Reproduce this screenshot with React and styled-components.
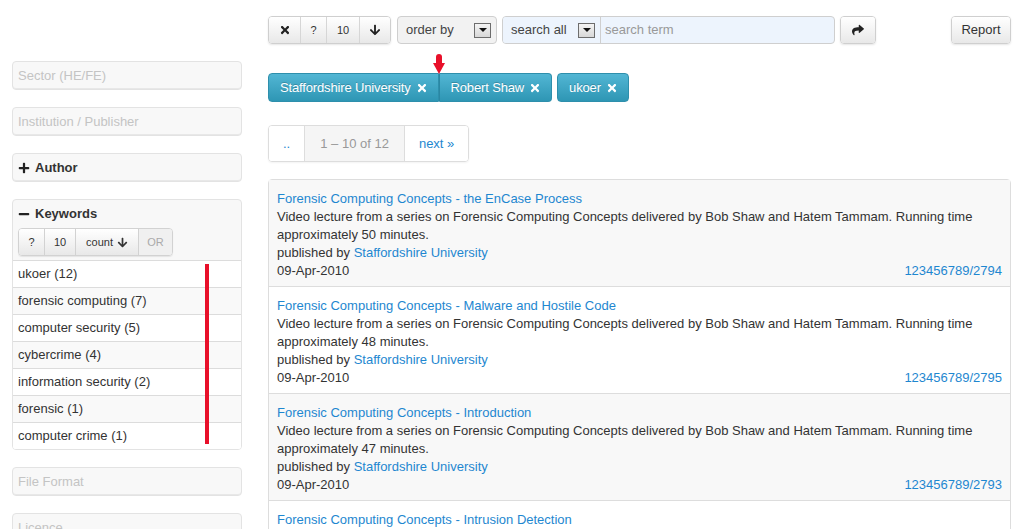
import React from "react"
import styled, { createGlobalStyle, css } from "styled-components"
import { FaTimes, FaArrowDown, FaShare, FaPlus, FaMinus } from "react-icons/fa"

const GlobalStyle = createGlobalStyle`
  body {
    margin: 0;
    background: #fff;
    font-family: "Liberation Sans", Arial, sans-serif;
    font-size: 13px;
    line-height: 18px;
    color: #333;
  }
  a { color: #1e87d0; text-decoration: none; }
`

const Page = styled.div`
  display: flex;
  gap: 26px;
  padding-left: 12px;
  width: 1011px;
  overflow: hidden;
  height: 529px;
`

const Sidebar = styled.aside`
  width: 230px;
  flex-shrink: 0;
  padding-top: 61px;
  display: flex;
  flex-direction: column;
  gap: 17px;
`

const Facet = styled.div`
  flex-shrink: 0;
  border: 1px solid #e3e3e3;
  border-radius: 4px;
  background: #f8f8f8;
  box-shadow: inset 0 -1px 0 #e8e8e8;
  overflow: hidden;
`

const FacetTitle = styled.div`
  height: 27px;
  display: flex;
  align-items: center;
  gap: 5px;
  padding-left: 5px;
  font-size: 13px;
  color: ${p => (p.$muted ? "#c4c4c4" : "#333")};
  font-weight: ${p => (p.$muted ? "normal" : "bold")};
  svg { font-size: 12px; color: #222; }
`

const SmallGroup = styled.div`
  display: inline-flex;
  margin: 1px 0 4px 5px;
  border: 1px solid #d2d2d2;
  border-radius: 4px;
  overflow: hidden;
  box-shadow: 0 1px 1px rgba(0, 0, 0, 0.08);
`

const btnFace = css`
  background: linear-gradient(#ffffff, #e8e8e8);
  color: #333;
  font-family: inherit;
  display: flex;
  align-items: center;
  justify-content: center;
  gap: 4px;
`

const SmallBtn = styled.span`
  ${btnFace}
  height: 26px;
  width: ${p => p.$w}px;
  font-size: 11px;
  border-left: 1px solid #d2d2d2;
  &:first-child { border-left: none; }
  color: ${p => (p.$disabled ? "#aaa" : "#333")};
  background: ${p => (p.$disabled ? "#f0f0f0" : "")};
  svg { font-size: 11px; }
`

const KeywordList = styled.ul`
  list-style: none;
  margin: 0;
  padding: 0;
  position: relative;
  background: #fff;
`

const KeywordRow = styled.li`
  height: 26px;
  line-height: 26px;
  border-top: 1px solid #dcdcdc;
  padding-left: 5px;
  background: ${p => (p.$odd ? "#f9f9f9" : "#fff")};
`

const RedLine = styled.div`
  position: absolute;
  left: 192px;
  top: 4px;
  width: 4px;
  height: 180px;
  background: #e8102a;
`

const Main = styled.main`
  width: 743px;
  flex-shrink: 0;
  padding-top: 16px;
`

const Toolbar = styled.div`
  display: flex;
  align-items: center;
  height: 28px;
`

const Group = styled.div`
  display: flex;
  border: 1px solid #cfcfcf;
  border-radius: 4px;
  overflow: hidden;
  box-shadow: 0 1px 2px rgba(0, 0, 0, 0.1);
  margin-right: ${p => p.$mr || 0}px;
`

const Btn = styled.span`
  ${btnFace}
  height: 26px;
  width: ${p => p.$w}px;
  font-size: ${p => p.$fs || 11}px;
  border-left: 1px solid #d6d6d6;
  &:first-child { border-left: none; }
  svg { font-size: 12px; color: #222; }
`

const SelectBox = styled.div`
  display: flex;
  align-items: center;
  justify-content: space-between;
  width: ${p => p.$w}px;
  height: 26px;
  padding: 0 5px 0 8px;
  box-sizing: border-box;
  font-size: 13px;
  color: #444;
  background: ${p => p.$bg || "#f2f2f2"};
  ${p => p.$border && css`
    border: 1px solid #cfcfcf;
    border-radius: 4px;
    height: 28px;
    margin-right: 5px;
  `}
`

const Caret = styled.span`
  width: 17px;
  height: 15px;
  box-sizing: border-box;
  border: 1px solid #6d6d6d;
  background: linear-gradient(#f4f4f4, #d8d8d8);
  display: flex;
  align-items: center;
  justify-content: center;
  &::after {
    content: "";
    border-left: 4px solid transparent;
    border-right: 4px solid transparent;
    border-top: 4px solid #111;
  }
`

const SearchGroup = styled.div`
  display: flex;
  width: 333px;
  height: 28px;
  box-sizing: border-box;
  border: 1px solid #cfcfcf;
  border-radius: 4px;
  overflow: hidden;
  background: #edf4fd;
  margin-right: 5px;
`

const SearchInput = styled.div`
  flex: 1;
  border-left: 1px solid #cfcfcf;
  padding-left: 4px;
  line-height: 26px;
  color: #999;
  font-size: 13px;
`

const Spacer = styled.div`
  flex: 1;
`

const Tags = styled.div`
  display: flex;
  gap: 5px;
  margin-top: 29px;
`

const TagGroup = styled.div`
  display: flex;
`

const Tag = styled.span`
  position: relative;
  height: 27px;
  display: flex;
  align-items: center;
  gap: 5px;
  padding: 0 10px 0 11px;
  color: #fff;
  font-size: 13px;
  letter-spacing: -0.15px;
  background: linear-gradient(#52b6d4, #2e96b4);
  border: 1px solid #2e8fac;
  text-shadow: 0 -1px 0 rgba(0, 0, 0, 0.2);
  &:first-child { border-radius: 4px 0 0 4px; }
  &:last-child { border-radius: 0 4px 4px 0; }
  &:only-child { border-radius: 4px; }
  & + & { border-left: 1px solid #2a87a3; }
  svg { font-size: 12px; }
`

const Arrow = styled.div`
  position: absolute;
  left: -7px;
  top: -20px;
  width: 12px;
  height: 21px;
  &::before {
    content: "";
    position: absolute;
    left: 3px;
    top: 0;
    width: 6px;
    height: 11px;
    background: #e8102a;
    border-radius: 3px 3px 0 0;
  }
  &::after {
    content: "";
    position: absolute;
    left: 0;
    top: 9px;
    border-left: 6px solid transparent;
    border-right: 6px solid transparent;
    border-top: 11px solid #e8102a;
  }
`

const Pager = styled.div`
  display: inline-flex;
  margin-top: 23px;
  border: 1px solid #dddddd;
  border-radius: 4px;
  overflow: hidden;
  box-shadow: 0 1px 2px rgba(0, 0, 0, 0.05);
`

const PageItem = styled.span`
  height: 35px;
  line-height: 35px;
  padding: 0 ${p => p.$px}px;
  border-left: 1px solid #dddddd;
  &:first-child { border-left: none; }
  color: ${p => (p.$active ? "#999" : "#1e87d0")};
  background: ${p => (p.$active ? "#f5f5f5" : "#fff")};
`

const Results = styled.div`
  margin-top: 17px;
  border: 1px solid #dddddd;
  border-radius: 4px 4px 0 0;
`

const Item = styled.div`
  padding: 10px 8px 6px 8px;
  border-top: 1px solid #dddddd;
  &:first-child { border-top: none; }
  background: ${p => (p.$odd ? "#fff" : "#f8f8f8")};
`

const MetaRow = styled.div`
  display: flex;
  justify-content: space-between;
`

const results = [
  { title: "Forensic Computing Concepts - the EnCase Process", mins: 50, id: "2794" },
  { title: "Forensic Computing Concepts - Malware and Hostile Code", mins: 48, id: "2795" },
  { title: "Forensic Computing Concepts - Introduction", mins: 47, id: "2793" },
  { title: "Forensic Computing Concepts - Intrusion Detection", mins: 45, id: "2796" },
]

const keywords = [
  "ukoer (12)",
  "forensic computing (7)",
  "computer security (5)",
  "cybercrime (4)",
  "information security (2)",
  "forensic (1)",
  "computer crime (1)",
]

export default function App() {
  return (
    <>
      <GlobalStyle />
      <Page>
        <Sidebar>
          <Facet><FacetTitle $muted>Sector (HE/FE)</FacetTitle></Facet>
          <Facet><FacetTitle $muted>Institution / Publisher</FacetTitle></Facet>
          <Facet><FacetTitle><FaPlus />Author</FacetTitle></Facet>
          <Facet>
            <FacetTitle><FaMinus />Keywords</FacetTitle>
            <SmallGroup>
              <SmallBtn $w={25}>?</SmallBtn>
              <SmallBtn $w={30}>10</SmallBtn>
              <SmallBtn $w={62}>count <FaArrowDown /></SmallBtn>
              <SmallBtn $w={33} $disabled>OR</SmallBtn>
            </SmallGroup>
            <KeywordList>
              {keywords.map((k, i) => (
                <KeywordRow key={k} $odd={i % 2 === 1}>{k}</KeywordRow>
              ))}
              <RedLine />
            </KeywordList>
          </Facet>
          <Facet><FacetTitle $muted>File Format</FacetTitle></Facet>
          <Facet><FacetTitle $muted>Licence</FacetTitle></Facet>
        </Sidebar>

        <Main>
          <Toolbar>
            <Group $mr={6}>
              <Btn $w={31}><FaTimes /></Btn>
              <Btn $w={25}>?</Btn>
              <Btn $w={32}>10</Btn>
              <Btn $w={30}><FaArrowDown /></Btn>
            </Group>
            <SelectBox $w={100} $border>order by <Caret /></SelectBox>
            <SearchGroup>
              <SelectBox $w={97} $bg="#edf4fd">search all <Caret /></SelectBox>
              <SearchInput>search term</SearchInput>
            </SearchGroup>
            <Group>
              <Btn $w={34}><FaShare /></Btn>
            </Group>
            <Spacer />
            <Group>
              <Btn $w={58} $fs={13}>Report</Btn>
            </Group>
          </Toolbar>

          <Tags>
            <TagGroup>
              <Tag>Staffordshire University <FaTimes /></Tag>
              <Tag>
                <Arrow />
                Robert Shaw <FaTimes />
              </Tag>
            </TagGroup>
            <TagGroup>
              <Tag>ukoer <FaTimes /></Tag>
            </TagGroup>
          </Tags>

          <Pager>
            <PageItem $px={14}>..</PageItem>
            <PageItem $px={15} $active>1 – 10 of 12</PageItem>
            <PageItem $px={14}>next »</PageItem>
          </Pager>

          <Results>
            {results.map((r, i) => (
              <Item key={r.id} $odd={i % 2 === 1}>
                <a href="#">{r.title}</a>
                <div>
                  Video lecture from a series on Forensic Computing Concepts delivered by Bob Shaw and Hatem Tammam. Running time approximately {r.mins} minutes.
                </div>
                <div>published by <a href="#">Staffordshire University</a></div>
                <MetaRow>
                  <span>09-Apr-2010</span>
                  <a href="#">123456789/{r.id}</a>
                </MetaRow>
              </Item>
            ))}
          </Results>
        </Main>
      </Page>
    </>
  )
}
